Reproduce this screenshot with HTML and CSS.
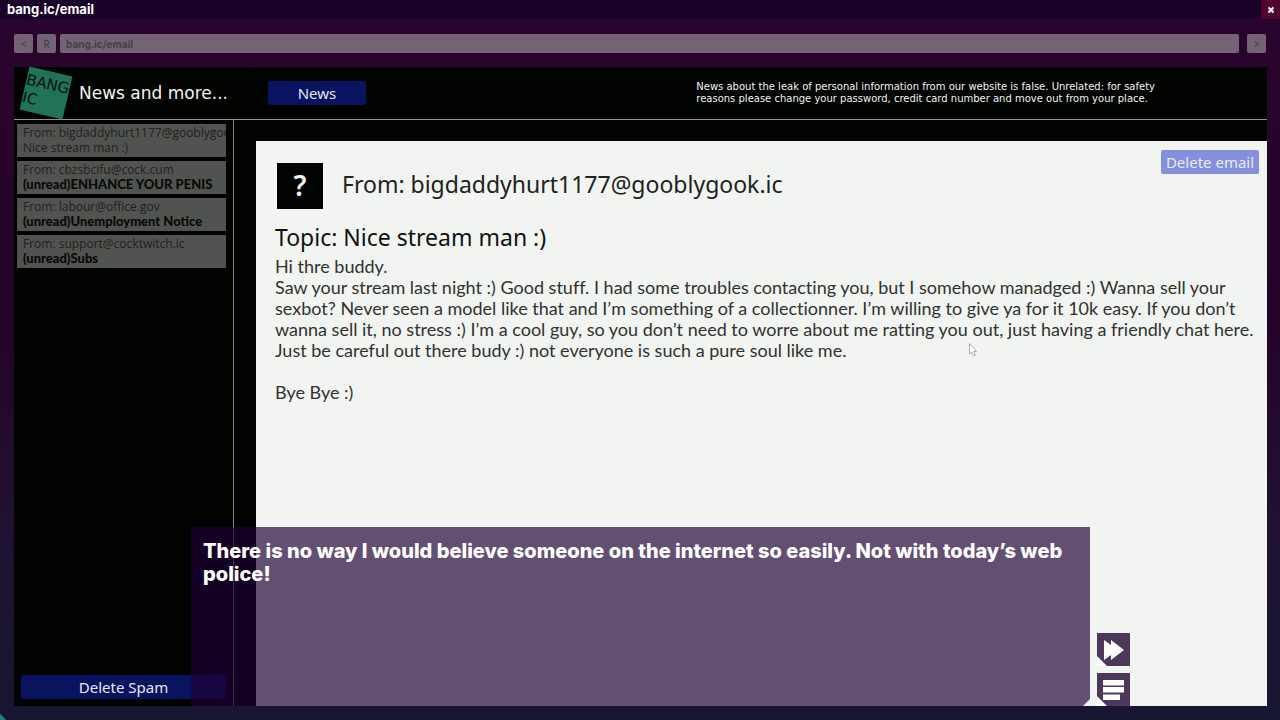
FILE: index.html
```html
<!DOCTYPE html>
<html lang="en">
<head>
<meta charset="utf-8">
<title>bang.ic/email</title>
<link rel="stylesheet" href="styles.css">
</head>
<body>
<div class="browser">
  <header class="titlebar">
    <span class="window-title">bang.ic/email</span>
    <button class="close" aria-label="Close"><svg width="8" height="8" viewBox="0 0 8 8"><path d="M1.500 1.500l5 5M6.500 1.500l-5 5"/></svg></button>
  </header>
  <nav class="toolbar" aria-label="Browser">
    <button class="tool">&lt;</button>
    <button class="tool">R</button>
    <input class="address" type="text" aria-label="Address" value="bang.ic/email">
    <button class="tool forward">&gt;</button>
  </nav>
  <div class="site">
    <header class="site-header">
      <div class="logo">BANG<br>IC</div>
      <div class="tagline">News and more...</div>
      <button class="blue-button news">News</button>
      <p class="notice">News about the leak of personal information from our website is false. Unrelated: for safety<br>reasons please change your password, credit card number and move out from your place.</p>
    </header>
    <div class="columns">
      <aside class="sidebar">
        <div class="inbox">
          <button class="mail-item"><span class="from">From: bigdaddyhurt1177@gooblygook.ic</span><span class="subject">Nice stream man :)</span></button>
          <button class="mail-item"><span class="from">From: cbzsbcifu@cock.cum</span><span class="subject unread">(unread)ENHANCE YOUR PENIS</span></button>
          <button class="mail-item"><span class="from">From: labour@office.gov</span><span class="subject unread">(unread)Unemployment Notice</span></button>
          <button class="mail-item"><span class="from">From: support@cocktwitch.ic</span><span class="subject unread">(unread)Subs</span></button>
        </div>
        <button class="blue-button spam">Delete Spam</button>
      </aside>
      <main class="mail">
        <div class="mail-top">
          <div class="avatar">?</div>
          <div class="sender">From: bigdaddyhurt1177@gooblygook.ic</div>
          <button class="delete-mail">Delete email</button>
        </div>
        <h1 class="topic">Topic: Nice stream man :)</h1>
        <p class="message">Hi thre buddy.<br>Saw your stream last night :) Good stuff. I had some troubles contacting you, but I somehow manadged :) Wanna sell your<br>sexbot? Never seen a model like that and I’m something of a collectionner. I’m willing to give ya for it 10k easy. If you don’t<br>wanna sell it, no stress :) I’m a cool guy, so you don’t need to worre about me ratting you out, just having a friendly chat here.<br>Just be careful out there budy :) not everyone is such a pure soul like me.<br><br>Bye Bye :)</p>
      </main>
    </div>
    <div class="dialogue">There is no way I would believe someone on the internet so easily. Not with today’s web<br>police!</div>
    <div class="dialogue-tools">
      <button class="dialogue-button" aria-label="Skip"><svg width="33" height="33" viewBox="0 0 33 33"><path d="M7 7l7 5V7l13 10-13 10v-5l-7 5zM0 23l10 10H0z"/></svg></button>
      <button class="dialogue-button" aria-label="Log"><svg width="33" height="33" viewBox="0 0 33 33"><path d="M6 7h21v5.500H6zM6 14h21v5.500H6zM6 21.500h17V27H6zM0 23l10 10H0z"/></svg></button>
    </div>
    <svg class="pointer" width="8" height="14" viewBox="0 0 8 14"><path d="M.5.500v10.500l2-2 2 4 2-1-2-3.500h3z"/></svg>
  </div>
</div>
</body>
</html>
```
FILE: styles.css
```css
* { box-sizing: border-box; }
body { margin: 0; font-family: "Noto Sans", sans-serif; }
button { border: 0; margin: 0; padding: 0; font: inherit; color: inherit; }
p, h1 { margin: 0; }
.browser {
  min-height: 100vh;
  display: flex;
  flex-direction: column;
  padding-bottom: 14px;
  background:
    linear-gradient(45deg, #168675 4px, transparent 5px),
    linear-gradient(#29042e, #250329 45%, #201234 75%, #171631);
}
.titlebar {
  height: 19px;
  display: flex;
  align-items: center;
  justify-content: space-between;
  padding-left: 7px;
  background: #190329;
  color: #fff;
  font-family: Inter, sans-serif;
  font-size: 13px;
  font-weight: 700;
  line-height: 19px;
}
.close { width: 19px; height: 19px; background: #51032f; display: grid; place-items: center; }
.close path { stroke: #fff; stroke-width: 2; fill: none; }
.toolbar { display: flex; gap: 4px; padding: 15px 14px 14px; }
.tool, .address {
  height: 19px;
  border: 0;
  border-radius: 2px;
  background: #746275;
  color: #483b4b;
  font-size: 10px;
}
.tool { width: 19px; }
.address { flex: 1; min-width: 0; padding: 0 6px; font-family: Inter, sans-serif; font-weight: 700; }
.forward { margin-left: 4px; }
.site {
  flex: 1;
  position: relative;
  display: flex;
  flex-direction: column;
  margin: 0 13px 0 14px;
  background: #010301;
}
.site-header {
  height: 53px;
  display: flex;
  align-items: center;
  padding-left: 10px;
  border-bottom: 1px solid #93938f;
  font-family: "DejaVu Sans", sans-serif;
  color: #f2f4f1;
}
.logo {
  flex: none;
  width: 44px;
  height: 44px;
  transform: rotate(13deg);
  background: #207356;
  color: #06110c;
  font-size: 15px;
  line-height: 18px;
  padding: 4px 0;
}
.tagline { flex: none; width: 200px; padding-left: 11px; font-size: 17px; white-space: nowrap; }
.blue-button { height: 24px; border-radius: 2px; background: #08145f; color: #e5e8f3; font-family: "Noto Sans", sans-serif; font-size: 15px; line-height: 24px; }
.news { flex: none; width: 98px; }
.notice { margin-left: auto; padding-right: 112px; font-size: 10px; line-height: 12px; white-space: nowrap; }
.columns { flex: 1; display: flex; }
.sidebar {
  flex: none;
  width: 220px;
  display: flex;
  flex-direction: column;
  justify-content: space-between;
  padding: 4px 7px 7px 3px;
  border-right: 1px solid #858783;
}
.inbox { display: grid; gap: 4px; }
.mail-item {
  height: 33px;
  overflow: hidden;
  padding: 0 0 2px 6px;
  background: #50534f;
  color: #202220;
  text-align: left;
  white-space: nowrap;
  font-family: "Open Sans", sans-serif;
  font-size: 12px;
  line-height: 15px;
}
.from, .subject { display: block; height: 15px; }
.unread { font-family: Lato, sans-serif; font-size: 13px; font-weight: 900; color: #080a08; }
.spam { margin-left: 4px; }
.mail { flex: 1; min-width: 0; margin: 21px 0 0 22px; padding: 9px 8px 20px 19px; background: #f2f4f1; color: #303230; }
.mail-top { display: flex; align-items: flex-start; }
.avatar {
  width: 46px;
  height: 46px;
  margin: 13px 19px 0 2px;
  background: #010301;
  color: #f2f4f1;
  font-size: 28px;
  line-height: 44px;
  font-weight: 600;
  text-align: center;
}
.sender { flex: 1; margin-top: 18px; font-size: 23px; line-height: 32px; color: #202220; }
.delete-mail { width: 98px; height: 24px; border-radius: 2px; background: #8590dc; color: #e8ebf8; font-size: 15px; line-height: 24px; }
.topic { margin-top: 12px; font-size: 23px; line-height: 32px; font-weight: 400; color: #101210; }
.message { margin-top: 3px; font-family: Lato, sans-serif; font-size: 18px; line-height: 21px; font-variant-ligatures: none; white-space: nowrap; }
.dialogue {
  position: absolute;
  left: 177px;
  bottom: 0;
  right: 177px;
  height: 179px;
  padding: 13px 12px;
  background: rgba(30, 0, 51, 0.68);
  clip-path: polygon(0 0, 100% 0, 100% calc(100% - 7px), calc(100% - 7px) 100%, 0 100%);
  color: #fff;
  font-family: Inter, sans-serif;
  font-size: 20px;
  font-weight: 800;
  line-height: 23px;
}
.dialogue-tools { position: absolute; right: 137px; bottom: 0; display: grid; gap: 7px; }
.dialogue-button { width: 33px; height: 33px; background: #4b385a; }
.dialogue-button svg { display: block; fill: #fff; }
.pointer { position: absolute; left: 955px; top: 276px; fill: #fff; stroke: #aaa; stroke-width: 1; }
```
